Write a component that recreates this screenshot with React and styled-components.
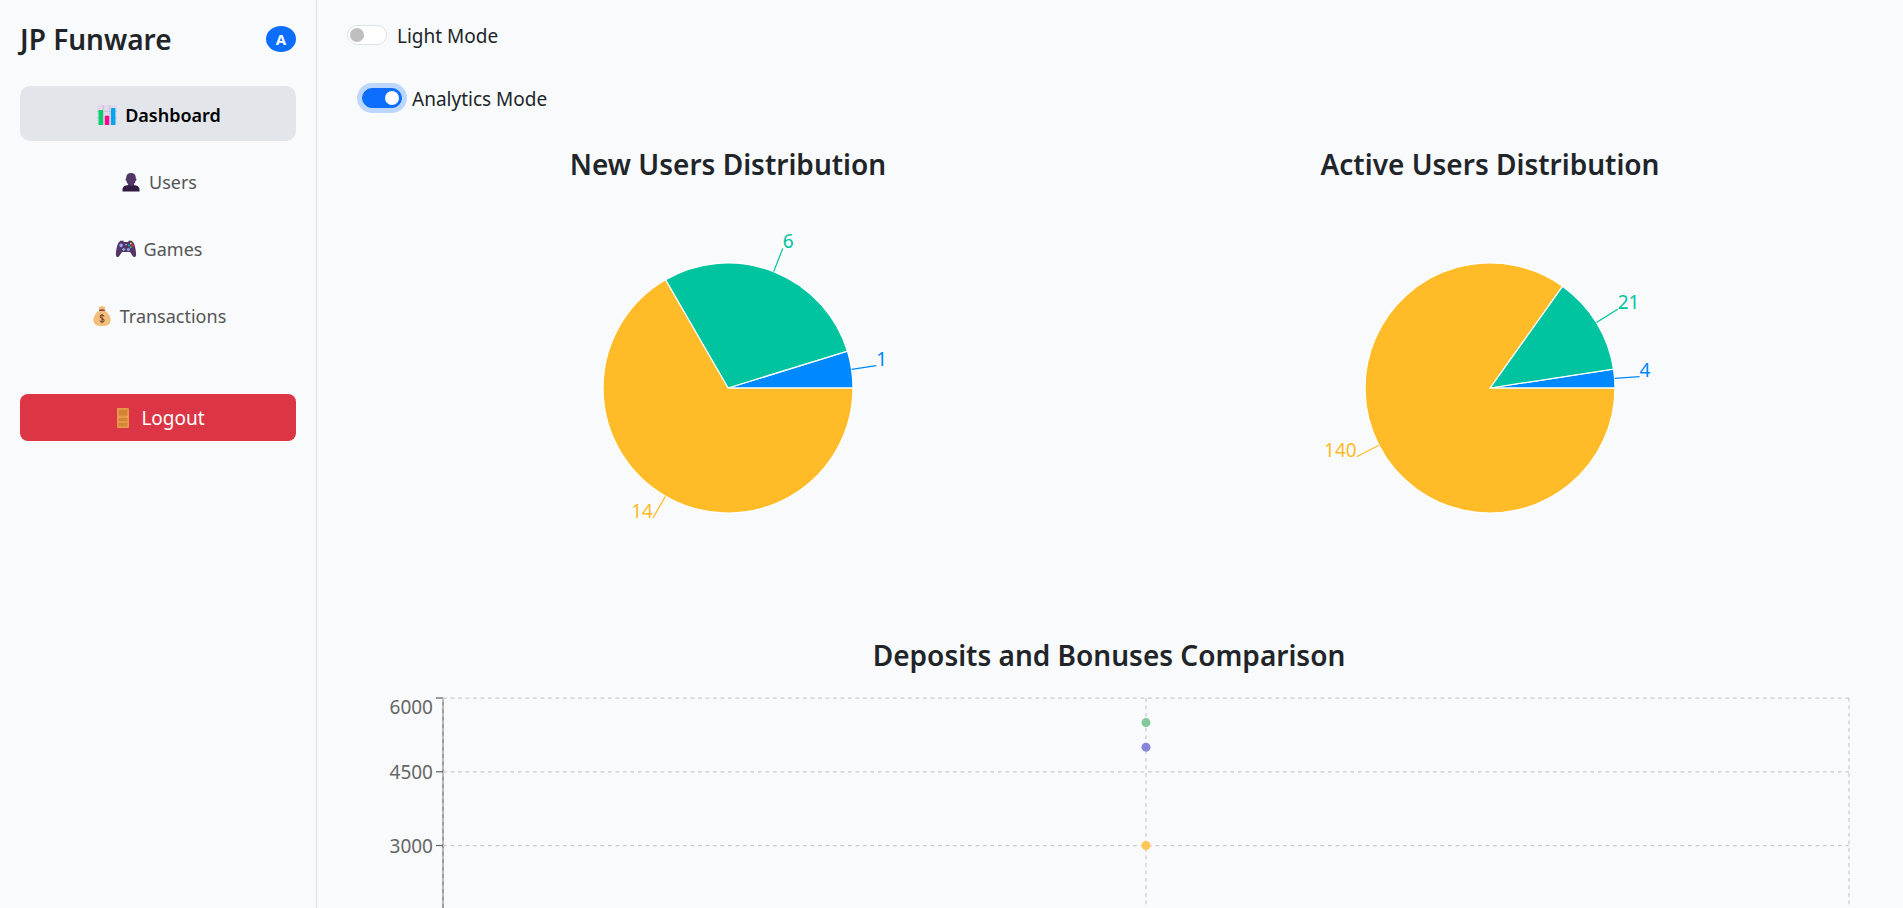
import React, { useState } from "react";
import styled, { createGlobalStyle } from "styled-components";

const GlobalStyle = createGlobalStyle`
  *, *::before, *::after { box-sizing: border-box; }
  body {
    margin: 0;
    background: #f8fafc;
    color: #212529;
    font-family: "Segoe UI", "Noto Sans", "Open Sans", sans-serif;
    font-size: 19px;
    line-height: 30px;
  }
`;

const Shell = styled.div`
  display: flex;
  min-height: 100vh;
`;

const Sidebar = styled.aside`
  flex: none;
  width: 317px;
  padding: 20px;
  border-right: 1px solid #dee2e6;
`;

const Brand = styled.div`
  display: flex;
  align-items: center;
  justify-content: space-between;
  height: 38px;
  margin-bottom: 28px;
`;

const BrandName = styled.h1`
  margin: 0;
  font-size: 28px;
  font-weight: 600;
  line-height: 36px;
`;

const Badge = styled.span`
  width: 30px;
  height: 26px;
  border-radius: 50%;
  background: #0d6efd;
  color: #fff;
  font-size: 15px;
  font-weight: 700;
  line-height: 26px;
  text-align: center;
`;

const Nav = styled.nav`
  display: flex;
  flex-direction: column;
  gap: 12px;
  margin-bottom: 52px;
`;

const NavLink = styled.a`
  display: flex;
  align-items: center;
  justify-content: center;
  gap: 6px;
  height: 55px;
  padding-top: 3px;
  border-radius: 10px;
  background: ${(p) => (p.$active ? "#e2e5e9" : "transparent")};
  color: ${(p) => (p.$active ? "#000" : "#555")};
  font-size: 18px;
  font-weight: ${(p) => (p.$active ? 600 : 400)};
  text-decoration: none;
`;

const LogoutButton = styled.button`
  display: flex;
  align-items: center;
  justify-content: center;
  gap: 6px;
  width: 100%;
  height: 47px;
  border: 0;
  border-radius: 8px;
  background: #dc3545;
  color: #fff;
  font: inherit;
  cursor: pointer;
`;

const Icon = styled.svg.attrs({ viewBox: "0 0 24 24", "aria-hidden": true })`
  flex: none;
  width: 24px;
  height: 24px;
`;

const Main = styled.main`
  flex: 1;
  min-width: 0;
  padding: 20px 32px 30px 30px;
`;

const SwitchRow = styled.div`
  display: flex;
  align-items: center;
  gap: 10px;
  height: 30px;
  margin-bottom: 33px;
  padding-left: ${(p) => (p.$inset ? "15px" : "0")};
`;

const SwitchLabel = styled.label`
  padding-top: 2px;
`;

const Switch = styled.input.attrs({ type: "checkbox", role: "switch" })`
  appearance: none;
  display: flex;
  align-items: center;
  width: 40px;
  height: 20px;
  margin: 0;
  padding: 0 2px;
  border: 1px solid #dee2e6;
  border-radius: 10px;
  background: #fff;
  cursor: pointer;

  &::before {
    content: "";
    width: 14px;
    height: 14px;
    border-radius: 50%;
    background: #bfbfbf;
  }

  &:checked {
    justify-content: flex-end;
    border-color: #0d6efd;
    background: #0d6efd;
    box-shadow: 0 0 0 5px rgba(13, 110, 253, 0.25);
  }

  &:checked::before {
    background: #fff;
  }
`;

const ChartTitle = styled.h2`
  margin: 0;
  font-size: 28px;
  font-weight: 600;
  line-height: 36px;
  text-align: center;
`;

const PieGrid = styled.div`
  display: grid;
  grid-template-columns: 1fr 1fr;
  margin-bottom: 61px;
`;

const PieCard = styled.section`
  display: flex;
  flex-direction: column;
  align-items: center;
  gap: 18px;
`;

const PieSvg = styled.svg`
  display: block;
  width: 376px;
  height: 376px;
`;

const Comparison = styled.section`
  display: flex;
  flex-direction: column;
  gap: 10px;
`;

const LineChartRow = styled.div`
  display: flex;
  height: 340px;
  padding-right: 22px;
`;

const AxisSvg = styled.svg`
  flex: none;
  width: 96px;
  height: 100%;
  overflow: visible;
`;

const PlotSvg = styled.svg`
  flex: 1;
  min-width: 0;
  height: 100%;
  overflow: visible;
`;

const COLORS = ["#0088FE", "#00C49F", "#FFBB28"];

function Pie({ title, values }) {
  const total = values.reduce((a, b) => a + b, 0);
  const point = (angle, r) => [r * Math.cos(angle), -r * Math.sin(angle)];
  let start = 0;
  const slices = values.map((value, i) => {
    const end = start + (value / total) * Math.PI * 2;
    const mid = (start + end) / 2;
    const slice = {
      value,
      color: COLORS[i],
      large: end - start > Math.PI ? 1 : 0,
      from: point(start, 125),
      to: point(end, 125),
      edge: point(mid, 125),
      tip: point(mid, 150),
    };
    start = end;
    return slice;
  });
  return (
    <PieCard>
      <ChartTitle>{title}</ChartTitle>
      <PieSvg viewBox="-188 -188 376 376" role="img" aria-label={title}>
        {slices.map((s) => (
          <path
            key={s.value}
            d={`M0 0L${s.from}A125 125 0 ${s.large} 0 ${s.to}Z`}
            fill={s.color}
            stroke="#fff"
            strokeWidth="1.25"
          />
        ))}
        {slices.map((s) => (
          <g key={s.value}>
            <path d={`M${s.edge}L${s.tip}`} stroke={s.color} strokeWidth="1.25" />
            <text
              x={s.tip[0]}
              y={s.tip[1]}
              fill={s.color}
              textAnchor={s.tip[0] > 0 ? "start" : "end"}
            >
              {s.value}
            </text>
          </g>
        ))}
      </PieSvg>
    </PieCard>
  );
}

const PLOT_TOP = 15;
const PLOT_HEIGHT = 295;
const TICKS = [6000, 4500, 3000, 1500, 0];
const POINTS = [
  { value: 5500, color: "#82ca9d" },
  { value: 5000, color: "#8884d8" },
  { value: 3000, color: "#ffc658" },
];
const yOf = (value) => PLOT_TOP + PLOT_HEIGHT * (1 - value / 6000);

function ComparisonChart() {
  const bottom = PLOT_TOP + PLOT_HEIGHT;
  const grid = { stroke: "#ccc", strokeWidth: 1.25, strokeDasharray: "3.75" };
  return (
    <LineChartRow>
      <AxisSvg>
        {TICKS.map((t) => (
          <g key={t}>
            <line x1="89" x2="96" y1={yOf(t)} y2={yOf(t)} stroke="#666" strokeWidth="1.25" />
            <text x="86" y={yOf(t) + (t === 6000 ? 16 : 7)} fill="#666" textAnchor="end">
              {t}
            </text>
          </g>
        ))}
        <line x1="96" x2="96" y1={PLOT_TOP} y2={bottom} stroke="#666" strokeWidth="1.25" />
      </AxisSvg>
      <PlotSvg role="img" aria-label="Deposits and Bonuses Comparison">
        {TICKS.map((t) => (
          <line key={t} x1="0" x2="100%" y1={yOf(t)} y2={yOf(t)} {...grid} />
        ))}
        {["0", "50%", "100%"].map((x) => (
          <line key={x} x1={x} x2={x} y1={PLOT_TOP} y2={bottom} {...grid} />
        ))}
        {POINTS.map((p) => (
          <circle key={p.value} cx="50%" cy={yOf(p.value)} r="4.5" fill={p.color} />
        ))}
      </PlotSvg>
    </LineChartRow>
  );
}

const ChartIcon = () => (
  <Icon>
    <rect x="2" y="2" width="20" height="20" rx="2" fill="#e1d8ec" />
    <path d="M8.3 2V22M15 2V22M2 8.4H22M2 15H22" stroke="#c8bdd4" strokeWidth="0.9" />
    <rect x="3.6" y="7" width="4.4" height="15" rx="0.6" fill="#00d26a" />
    <rect x="9.8" y="12.8" width="4.4" height="9.2" rx="0.6" fill="#f70a8d" />
    <rect x="16" y="5" width="4.4" height="17" rx="0.6" fill="#00a6ed" />
  </Icon>
);

const UserIcon = () => (
  <Icon>
    <path d="M9.2 12.5H14.8V16L12 18.5L9.2 16Z" fill="#46295a" />
    <path d="M3.5 21.5V19.5C3.5 16.6 6 15.3 9.4 14.9C10.5 17 13.5 17 14.6 14.9C18 15.3 20.5 16.6 20.5 19.5V21.5Z" fill="#321b41" />
    <path d="M12 3C8.9 3 7.2 5 7.2 7.7V8.4C6.3 8.3 6.3 10.7 7.4 10.8C7.8 13.6 9.8 15.3 12 15.3S16.2 13.6 16.6 10.8C17.7 10.7 17.7 8.3 16.8 8.4V7.7C16.8 5 15.1 3 12 3Z" fill="#533566" />
  </Icon>
);

const GameIcon = () => (
  <Icon>
    <path d="M6.5 3.8H9.5V5H6ZM14.5 3.8H17.5L18 5H14.5Z" fill="#3b2049" />
    <path d="M5.6 4.5C6.8 4 8.6 4.2 9.4 5H14.6C15.4 4.2 17.2 4 18.4 4.5C20.6 6 22 13.2 22.1 17.2C22.1 20.5 19.6 20.8 18.5 18.8L16.8 15.9C16.4 15.2 15.8 15 15 15H9C8.2 15 7.6 15.2 7.2 15.9L5.5 18.8C4.4 20.8 1.9 20.5 1.9 17.2C2 13.2 3.4 6 5.6 4.5Z" fill="#533566" />
    <circle cx="7.1" cy="8.4" r="1.8" fill="#8fa7f0" />
    <path d="M9.7 10.9V13.9M8.2 12.4H11.2" stroke="#8fa7f0" strokeWidth="1.2" />
    <circle cx="14.4" cy="12.4" r="1.5" fill="#8fa7f0" />
    <path d="M11.2 7.6H12.8" stroke="#b9b4d6" strokeWidth="1.1" />
    <circle cx="16.8" cy="6.6" r="1" fill="#f9c23c" />
    <circle cx="18.7" cy="8.4" r="1" fill="#f8312f" />
    <circle cx="15" cy="8.4" r="1" fill="#00a6ed" />
    <circle cx="16.8" cy="10.2" r="1" fill="#44c060" />
  </Icon>
);

const MoneyIcon = () => (
  <Icon>
    <path d="M9.6 6L8.6 3.3C9.3 2 10.6 3.3 12 1.7C13.4 3.3 14.7 2 15.4 3.3L14.4 6Z" fill="#f3b978" />
    <path d="M9.6 6.6H14.4C17.8 8.5 20.6 12.4 20.6 16.1C20.6 20 18 21.9 14.5 21.9H9.5C6 21.9 3.4 20 3.4 16.1C3.4 12.4 6.2 8.5 9.6 6.6Z" fill="#f2be79" />
    <rect x="9" y="5.5" width="6" height="1.5" rx="0.7" fill="#7d4533" />
    <path d="M14 12.4C13.6 10.5 10.2 10.5 10.1 12.6C10.1 14.9 14.1 14.1 14.1 16.5C14 18.6 10.3 18.6 9.9 16.5M12 10V19.2" fill="none" stroke="#7d4533" strokeWidth="1.1" />
  </Icon>
);

const DoorIcon = () => (
  <Icon>
    <rect x="6" y="2" width="12" height="20" rx="1" fill="#e59a47" />
    <g fill="#d68338">
      <rect x="7.7" y="3.8" width="8.6" height="5.8" rx="0.4" />
      <rect x="7.7" y="12" width="8.6" height="3.2" rx="0.4" />
      <rect x="7.7" y="17" width="8.6" height="3.2" rx="0.4" />
    </g>
    <circle cx="16.2" cy="11" r="0.9" fill="#f9b03c" />
  </Icon>
);

const NAV_ITEMS = [
  { label: "Dashboard", icon: ChartIcon, active: true },
  { label: "Users", icon: UserIcon },
  { label: "Games", icon: GameIcon },
  { label: "Transactions", icon: MoneyIcon },
];

export default function App() {
  const [light, setLight] = useState(false);
  const [analytics, setAnalytics] = useState(true);
  return (
    <>
      <GlobalStyle />
      <Shell>
        <Sidebar>
          <Brand>
            <BrandName>JP Funware</BrandName>
            <Badge>A</Badge>
          </Brand>
          <Nav>
            {NAV_ITEMS.map(({ label, icon: ItemIcon, active }) => (
              <NavLink key={label} href="#" $active={active} aria-current={active ? "page" : undefined}>
                <ItemIcon />
                {label}
              </NavLink>
            ))}
          </Nav>
          <LogoutButton type="button">
            <DoorIcon />
            Logout
          </LogoutButton>
        </Sidebar>
        <Main>
          <SwitchRow>
            <Switch id="light-mode" checked={light} onChange={(e) => setLight(e.target.checked)} />
            <SwitchLabel htmlFor="light-mode">Light Mode</SwitchLabel>
          </SwitchRow>
          <SwitchRow $inset>
            <Switch id="analytics-mode" checked={analytics} onChange={(e) => setAnalytics(e.target.checked)} />
            <SwitchLabel htmlFor="analytics-mode">Analytics Mode</SwitchLabel>
          </SwitchRow>
          <PieGrid>
            <Pie title="New Users Distribution" values={[1, 6, 14]} />
            <Pie title="Active Users Distribution" values={[4, 21, 140]} />
          </PieGrid>
          <Comparison>
            <ChartTitle>Deposits and Bonuses Comparison</ChartTitle>
            <ComparisonChart />
          </Comparison>
        </Main>
      </Shell>
    </>
  );
}
